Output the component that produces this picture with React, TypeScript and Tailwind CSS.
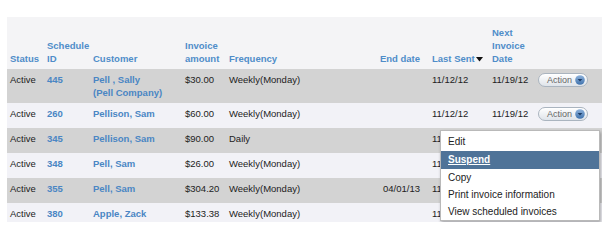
import React from "react";

type Row = {
  status: string;
  id: string;
  customer: string;
  company?: string;
  amount: string;
  freq: string;
  end: string;
  last: string;
  next: string;
};

const rows: Row[] = [
  { status: "Active", id: "445", customer: "Pell , Sally", company: "(Pell Company)", amount: "$30.00", freq: "Weekly(Monday)", end: "", last: "11/12/12", next: "11/19/12" },
  { status: "Active", id: "260", customer: "Pellison, Sam", amount: "$60.00", freq: "Weekly(Monday)", end: "", last: "11/12/12", next: "11/19/12" },
  { status: "Active", id: "345", customer: "Pellison, Sam", amount: "$90.00", freq: "Daily", end: "", last: "11/12/12", next: "11/19/12" },
  { status: "Active", id: "348", customer: "Pell, Sam", amount: "$26.00", freq: "Weekly(Monday)", end: "", last: "11/12/12", next: "11/19/12" },
  { status: "Active", id: "355", customer: "Pell, Sam", amount: "$304.20", freq: "Weekly(Monday)", end: "04/01/13", last: "11/12/12", next: "11/19/12" },
  { status: "Active", id: "380", customer: "Apple, Zack", company: "(XYZ Company, Inc.)", amount: "$133.38", freq: "Weekly(Monday)", end: "", last: "11/12/12", next: "11/19/12" },
];

function ActionButton() {
  return (
    <div className="mt-[2px] flex h-[14px] w-[50px] items-center justify-between rounded-full border border-[#aab4bf] bg-gradient-to-b from-[#ffffff] to-[#dfe4ea] pl-[8px] pr-[2px] shadow-[inset_0_1px_0_#fff]">
      <span className="text-[9px] leading-[12px] text-[#666]">Action</span>
      <svg width="10" height="10" viewBox="0 0 10 10">
        <defs>
          <linearGradient id="ab" x1="0" y1="0" x2="0" y2="1">
            <stop offset="0" stopColor="#8fb3dc" />
            <stop offset="1" stopColor="#3f72ad" />
          </linearGradient>
        </defs>
        <circle cx="5" cy="5" r="4.8" fill="url(#ab)" />
        <path d="M2.6 4 L7.4 4 L5 6.6 Z" fill="#1d3c66" />
      </svg>
    </div>
  );
}

export default function App() {
  const th = "align-bottom pb-[4px] pl-[3px] text-left font-bold text-[#4f8dc9]";
  const td = "align-top pt-[4px] pb-[4px] pl-[3px]";
  return (
    <div
      className="h-[231px] w-[607px] overflow-hidden bg-white pt-[17px] pl-[7px]"
      style={{ fontFamily: '"Liberation Sans", Arial, Helvetica, sans-serif' }}
    >
      <div className="relative h-[205px] w-[595px] overflow-hidden">
        <table className="w-[595px] table-fixed border-collapse text-[9.5px] leading-[13px] text-[#222]">
          <colgroup>
            <col className="w-[37px]" />
            <col className="w-[46px]" />
            <col className="w-[92px]" />
            <col className="w-[44px]" />
            <col className="w-[134px]" />
            <col className="w-[69px]" />
            <col className="w-[60px]" />
            <col className="w-[46px]" />
            <col className="w-[67px]" />
          </colgroup>
          <thead>
            <tr className="h-[52px] bg-[#f4f4f6]">
              <th className={th}>Status</th>
              <th className={th}>
                Schedule
                <br />
                ID
              </th>
              <th className={th}>Customer</th>
              <th className={th}>
                Invoice
                <br />
                amount
              </th>
              <th className={th}>Frequency</th>
              <th className="align-bottom pb-[4px] pr-[9px] text-right font-bold text-[#4f8dc9]">End date</th>
              <th className={th}>
                <span className="inline-flex items-center">
                  Last Sent
                  <svg width="7" height="5" viewBox="0 0 7 5" className="ml-[1px] mt-[1px]">
                    <path d="M0 0 L7 0 L3.5 4.5 Z" fill="#111" />
                  </svg>
                </span>
              </th>
              <th className={th}>
                Next
                <br />
                Invoice
                <br />
                Date
              </th>
              <th className={th}></th>
            </tr>
          </thead>
          <tbody>
            {rows.map((r, i) => (
              <tr key={r.id} className={"h-[25px] " + (i % 2 === 0 ? "bg-[#d3d3d3]" : "bg-[#f2f2f7]")}>
                <td className={td}>{r.status}</td>
                <td className={td + " font-bold text-[#4a86c4]"}>{r.id}</td>
                <td className={td + " font-bold text-[#4a86c4]"}>
                  <div className="whitespace-nowrap">{r.customer}</div>
                  {r.company && <div className="whitespace-nowrap">{r.company}</div>}
                </td>
                <td className={td}>{r.amount}</td>
                <td className={td}>{r.freq}</td>
                <td className={"align-top pt-[4px] pb-[4px] pr-[9px] text-right"}>{r.end}</td>
                <td className={td}>{r.last}</td>
                <td className={td}>{r.next}</td>
                <td className="align-top pt-[2px] pb-[4px] pl-[3px]">
                  <ActionButton />
                </td>
              </tr>
            ))}
          </tbody>
        </table>

        <div className="absolute left-[433px] top-[113px] w-[160px] border border-[#b9b9b9] bg-white pt-[2px] text-[10px] leading-[17px] text-[#222] shadow-[1px_2px_3px_rgba(0,0,0,0.3)]">
          <div className="h-[18px] pl-[7px] leading-[18px]">Edit</div>
          <div className="h-[18px] bg-[#4f7398] pl-[7px] font-bold leading-[18px] text-white underline">Suspend</div>
          <div className="h-[17px] pl-[7px]">Copy</div>
          <div className="h-[17px] pl-[7px]">Print invoice information</div>
          <div className="h-[17px] pl-[7px]">View scheduled invoices</div>
        </div>
      </div>
    </div>
  );
}
